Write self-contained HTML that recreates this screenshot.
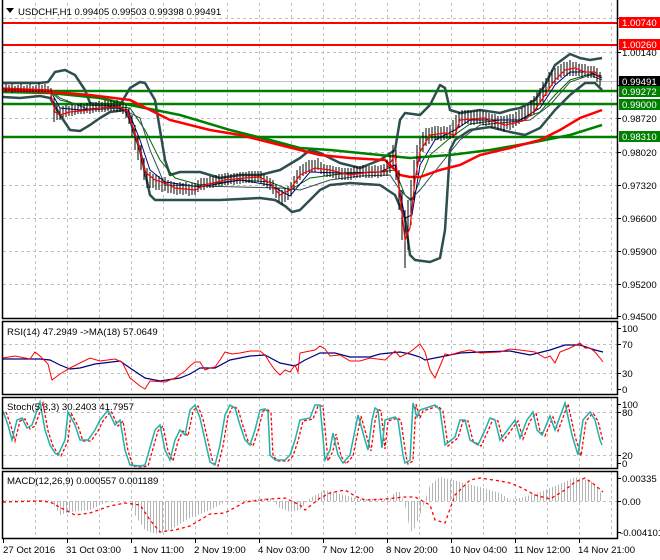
<!DOCTYPE html>
<html><head><meta charset="utf-8"><style>
html,body{margin:0;padding:0;background:#fff;width:660px;height:560px;overflow:hidden}
svg{display:block}
text{font-family:"Liberation Sans",sans-serif;font-size:9.6px;fill:#000}
</style></head><body>
<svg width="660" height="560" viewBox="0 0 660 560" xmlns="http://www.w3.org/2000/svg">
<defs>
<pattern id="hist" x="0" y="0" width="3" height="10" patternUnits="userSpaceOnUse"><rect x="0" y="0" width="1" height="10" fill="#b4b4b4"/></pattern>
</defs>
<rect width="660" height="560" fill="#fff"/>
<g stroke="#c0c0c0" stroke-dasharray="3,3" stroke-width="1" fill="none">
<path d="M3 18.5H617M3 52.5H617M3 118.5H617M3 152.5H617M3 185.5H617M3 218.5H617M3 251.5H617M3 284.5H617"/>
<path d="M35.5 3V318M67.5 3V318M99.5 3V318M131.5 3V318M163.5 3V318M195.5 3V318M227.5 3V318M259.5 3V318M291.5 3V318M323.5 3V318M355.5 3V318M387.5 3V318M419.5 3V318M451.5 3V318M483.5 3V318M515.5 3V318M547.5 3V318M579.5 3V318M611.5 3V318"/>
<path d="M3 344.5H617M3 373.5H617M3 412.5H617M3 455.5H617M3 501.5H617"/>
<path d="M35.5 322V394M67.5 322V394M99.5 322V394M131.5 322V394M163.5 322V394M195.5 322V394M227.5 322V394M259.5 322V394M291.5 322V394M323.5 322V394M355.5 322V394M387.5 322V394M419.5 322V394M451.5 322V394M483.5 322V394M515.5 322V394M547.5 322V394M579.5 322V394M611.5 322V394"/>
<path d="M35.5 398V468M67.5 398V468M99.5 398V468M131.5 398V468M163.5 398V468M195.5 398V468M227.5 398V468M259.5 398V468M291.5 398V468M323.5 398V468M355.5 398V468M387.5 398V468M419.5 398V468M451.5 398V468M483.5 398V468M515.5 398V468M547.5 398V468M579.5 398V468M611.5 398V468"/>
<path d="M35.5 472V538M67.5 472V538M99.5 472V538M131.5 472V538M163.5 472V538M195.5 472V538M227.5 472V538M259.5 472V538M291.5 472V538M323.5 472V538M355.5 472V538M387.5 472V538M419.5 472V538M451.5 472V538M483.5 472V538M515.5 472V538M547.5 472V538M579.5 472V538M611.5 472V538"/>
</g>
<path d="M3 81.5H617" stroke="#c0c0c0" stroke-width="1"/>
<path d="M3 23H617M3 45H617" stroke="#ff0000" stroke-width="2"/>
<path d="M3 91H617M3 104H617M3 137H617" stroke="#008000" stroke-width="2.5"/>
<g fill="none" stroke="#2f4f4f" stroke-width="2.5" stroke-linejoin="round">
<polyline points="3,83 40,83 48,82 55,72 65,70 75,75 85,90 90,103 100,105 120,105 130,88 140,82 145,83 155,100 160,130 165,160 170,175 180,172 200,172 220,178 240,175 260,175 280,170 300,158 310,150 320,153 340,163 360,168 380,160 395,150 400,120 405,113 420,115 430,105 440,85 445,88 450,110 460,113 480,110 500,113 510,110 520,108 535,100 545,85 555,65 570,54 580,58 590,60 602,58"/>
<polyline points="3,97 20,98 40,96 50,98 60,115 70,130 80,131 90,125 100,118 110,112 125,110 130,120 140,150 150,195 155,200 180,200 220,200 260,198 275,200 285,206 292,212 300,210 310,200 320,190 330,185 350,183 380,185 395,195 405,218 410,255 415,260 430,262 440,258 445,230 450,150 455,140 470,130 490,127 510,132 525,135 540,128 555,110 570,95 585,83 595,83 602,90"/>
</g>
<polyline fill="none" stroke="#006400" stroke-width="1" points="3,90 50,91 60,100 80,105 110,106 130,108 145,130 160,160 175,178 200,185 240,180 270,182 290,190 310,178 340,174 380,172 395,170 405,195 412,200 420,180 430,155 450,138 470,124 500,120 520,120 540,112 555,95 570,80 590,74 602,76"/>
<polyline fill="none" stroke="#000080" stroke-width="1" points="3,89 50,90 60,108 80,110 110,107 128,110 140,140 150,170 165,182 200,187 240,180 270,185 290,196 310,172 340,173 380,172 395,165 405,218 412,215 420,165 435,140 455,130 470,120 500,120 520,120 540,108 555,85 570,72 590,72 602,78"/>
<polyline fill="none" stroke="#2f4f4f" stroke-width="1" points="3,90 50,90 60,98 90,110 120,108 140,118 150,150 165,185 200,186 240,187 280,188 300,190 330,180 360,176 390,175 400,190 410,200 420,190 440,165 460,140 480,125 510,122 530,120 550,105 570,82 590,75 602,80"/>
<polyline fill="none" stroke="#008000" stroke-width="2.5" points="3,92 50,93 100,98 130,105 180,115 230,130 270,140 300,148 330,150 380,155 410,158 450,155 490,150 530,143 570,135 602,125"/>
<polyline fill="none" stroke="#ff0000" stroke-width="2.5" points="3,90 50,92 90,95 130,100 170,120 210,130 240,135 280,145 300,150 320,155 350,158 385,160 400,175 410,177 420,177 440,170 460,165 480,155 510,148 540,140 560,130 580,118 602,110"/>
<!-- candles -->
<g stroke="#000" stroke-width="1">
<path d="M6 84v8M9 85v6M12 84v9M15 86v6M18 85v7M21 84v8M24 86v6M27 85v7M30 84v8M33 86v6M36 85v7M39 83v9M42 85v7M45 84v8M48 86v6M51 88v10M54 98v24M57 105v15M60 108v12M63 106v12M66 105v12M69 106v10M72 104v12M75 105v10M78 104v10M81 103v11M84 104v10M87 103v10M90 102v12M93 103v10M96 102v10M99 101v11M102 102v10M105 100v12M108 101v10M111 100v11M114 101v10M117 100v12M120 102v10M123 102v12M126 104v14M129 108v16M132 115v22M135 125v25M138 135v25M141 145v25M144 158v22M147 168v20M150 172v16M153 174v14M156 175v15M159 176v14M162 178v14M165 177v14M168 180v13M171 181v12M174 182v12M177 183v12M180 182v12M183 183v12M186 182v12M189 184v12M192 183v12M195 183v12M198 180v12M201 178v12M204 178v12M207 178v10M210 176v12M213 176v12M216 175v12M219 174v12M222 174v12M225 173v12M228 173v12M231 174v10M234 173v12M237 173v11M240 172v12M243 172v11M246 172v11M249 171v12M252 171v12M255 171v11M258 171v11M261 171v12M264 174v12M267 176v12M270 178v12M273 180v14M276 184v14M279 188v14M282 190v15M285 188v14M288 186v14M291 182v14M294 176v14M297 170v14M300 166v14M303 164v12M306 162v12M309 160v12M312 160v12M315 160v12M318 158v12M321 162v12M324 164v12M327 165v12M330 165v12M333 166v12M336 167v12M339 167v12M342 168v12M345 168v12M348 168v12M351 168v12M354 166v12M357 166v12M360 166v12M363 165v12M366 166v12M369 166v12M372 166v12M375 165v12M378 166v12M381 165v12M384 164v12M387 160v16M390 155v18M393 145v22M396 150v30M399 170v40M402 190v50M405 210v58M408 200v50M411 180v45M414 160v40M417 145v30M420 138v24M423 132v20M426 128v18M429 128v16M432 127v14M435 126v14M438 126v14M441 127v14M444 126v14M447 127v12M450 125v14M453 120v18M456 115v20M459 112v16M462 110v16M465 110v14M468 110v14M471 111v14M474 111v14M477 110v14M480 110v14M483 111v14M486 112v14M489 113v12M492 114v14M495 114v14M498 116v14M501 116v14M504 116v16M507 115v14M510 114v16M513 114v14M516 112v14M519 110v14M522 108v14M525 106v14M528 104v14M531 100v16M534 96v18M537 92v18M540 88v16M543 82v20M546 78v18M549 72v18M552 70v16M555 68v16M558 66v14M561 64v14M564 62v14M567 62v14M570 60v16M573 62v14M576 62v14M579 64v12M582 64v14M585 64v12M588 66v12M591 66v12M594 66v12M597 68v14M600 72v14"/>
</g>
<polyline fill="none" stroke="#ff0000" stroke-width="1.2" points="3,88 50,90 55,112 60,115 70,112 90,110 100,108 120,107 128,112 140,150 145,172 155,180 165,183 175,188 195,190 205,185 225,180 245,178 260,177 270,183 280,195 290,190 300,175 315,168 330,170 350,175 370,172 385,172 395,155 400,195 405,240 410,228 415,180 420,152 430,135 445,133 455,135 460,120 485,118 495,122 505,125 515,123 525,120 535,110 545,95 555,80 565,70 575,68 585,72 595,72 600,78"/>
<!-- RSI -->
<polyline fill="none" stroke="#000080" stroke-width="1.2" points="3,359 40,359 50,360 60,365 70,369 80,368 95,364 120,361 130,368 145,378 160,381 180,378 190,374 200,368 215,368 230,360 250,356 265,355 280,363 295,366 305,360 320,353 335,353 350,357 370,357 380,354 400,352 410,354 420,357 425,360 440,357 460,353 480,352 510,351 520,353 530,355 550,350 565,345 580,345 595,350 603,352"/>
<polyline fill="none" stroke="#ff0000" stroke-width="1" points="3,358 15,356 30,359 35,352 40,356 48,364 52,380 60,374 70,368 80,363 90,358 100,361 115,359 122,362 130,378 140,386 145,389 150,381 165,382 175,378 185,371 190,366 195,362 200,362 205,370 210,368 215,367 220,360 225,352 232,354 240,353 250,351 260,351 265,355 270,363 275,370 280,375 285,370 290,372 295,365 298,372 300,353 305,352 315,350 320,346 325,349 330,356 340,355 350,361 360,361 370,358 385,360 395,351 400,357 410,352 420,344 425,352 430,370 435,378 440,366 445,354 450,355 460,352 470,350 480,353 500,352 510,349 520,350 535,352 545,358 550,356 555,363 560,352 570,348 580,343 585,348 590,348 595,352 600,358 603,362"/>
<!-- Stoch -->
<polyline fill="none" stroke="#ff0000" stroke-width="1.3" stroke-dasharray="3,2" transform="translate(3,1)" points="3,411 8,425 12,440 17,420 22,418 27,428 32,425 40,402 45,430 50,445 55,453 58,455 65,440 68,412 75,425 80,440 88,440 95,430 100,420 108,410 115,425 120,420 125,450 130,465 140,466 145,465 155,430 160,425 165,450 170,460 175,440 180,430 185,435 190,410 195,405 200,418 205,440 210,462 215,465 220,445 225,415 230,405 235,408 240,425 245,440 250,445 255,430 260,410 265,409 268,412 270,455 275,460 285,460 290,455 295,440 300,420 310,418 315,405 320,405 325,460 330,450 333,433 338,455 343,463 350,455 355,430 358,415 365,440 368,450 372,420 375,408 378,410 382,448 385,420 395,417 398,420 403,455 405,463 410,460 413,403 417,417 420,410 435,405 440,410 445,445 455,437 460,420 465,420 470,440 478,445 485,430 490,418 495,420 500,440 515,420 520,438 527,420 533,412 537,430 542,435 550,416 555,430 565,403 572,435 578,455 583,420 590,412 595,420 600,440"/>
<polyline fill="none" stroke="#20b2aa" stroke-width="1.5" points="3,411 8,425 12,440 17,420 22,418 27,428 32,425 40,402 45,430 50,445 55,453 58,455 65,440 68,412 75,425 80,440 88,440 95,430 100,420 108,410 115,425 120,420 125,450 130,465 140,466 145,465 155,430 160,425 165,450 170,460 175,440 180,430 185,435 190,410 195,405 200,418 205,440 210,462 215,465 220,445 225,415 230,405 235,408 240,425 245,440 250,445 255,430 260,410 265,409 268,412 270,455 275,460 285,460 290,455 295,440 300,420 310,418 315,405 320,405 325,460 330,450 333,433 338,455 343,463 350,455 355,430 358,415 365,440 368,450 372,420 375,408 378,410 382,448 385,420 395,417 398,420 403,455 405,463 410,460 413,403 417,417 420,410 435,405 440,410 445,445 455,437 460,420 465,420 470,440 478,445 485,430 490,418 495,420 500,440 515,420 520,438 527,420 533,412 537,430 542,435 550,416 555,430 565,403 572,435 578,455 583,420 590,412 595,420 600,440 602,445"/>
<!-- MACD -->
<polygon fill="url(#hist)" points="3,500 48,500 52,502 60,515 70,512 90,510 100,505 110,501 130,501 135,515 145,530 155,534 170,530 190,518 210,510 225,502 270,498 280,508 290,512 300,510 310,498 325,490 340,494 360,499 390,499 395,492 400,492 405,505 410,530 413,532 418,520 422,510 430,485 440,477 460,482 480,487 500,493 510,500 520,498 540,492 560,484 575,477 590,480 600,490 603,501 3,501"/>
<polyline fill="none" stroke="#ff0000" stroke-width="1.3" stroke-dasharray="3,3" points="3,502 40,501 50,502 65,510 75,515 90,513 110,506 125,503 140,505 150,520 160,532 175,530 190,526 210,514 225,513 245,502 270,499 285,498 300,505 305,510 320,498 330,493 345,490 355,496 365,500 385,499 405,497 415,497 430,505 435,520 445,523 455,495 470,480 480,478 500,481 510,483 520,487 535,495 550,499 565,490 575,482 585,478 595,485 603,492"/>
<g fill="none" stroke="#000" stroke-width="1.5">
<path d="M2.5 0V318.5H617.5V0"/>
<rect x="2.5" y="321.5" width="615" height="73"/>
<rect x="2.5" y="397.5" width="615" height="71"/>
<rect x="2.5" y="471.5" width="615" height="67"/>
</g>
<g stroke="#000" stroke-width="1">
<path d="M617 18.5h4M617 52.5h4M617 85.5h4M617 118.5h4M617 152.5h4M617 185.5h4M617 218.5h4M617 251.5h4M617 284.5h4M617 316.5h4"/>
<path d="M617 328.5h4M617 344.5h4M617 373.5h4M617 389.5h4M617 404.5h4M617 412.5h4M617 455.5h4M617 463.5h4M617 478.5h4M617 501.5h4M617 532.5h4"/>
<path d="M3.5 538v5M67.5 538v5M131.5 538v5M195.5 538v5M259.5 538v5M323.5 538v5M387.5 538v5M451.5 538v5M515.5 538v5M579.5 538v5"/>
</g>
<path d="M6 8h8l-4 5z" fill="#000"/>
<text x="18" y="15">USDCHF,H1  0.99405 0.99503 0.99398 0.99491</text>
<text x="7" y="335">RSI(14) 47.2949  -&gt;MA(18) 57.0649</text>
<text x="7" y="410">Stoch(5,3,3) 30.2403 41.7957</text>
<text x="7" y="484">MACD(12,26,9) 0.000557 0.001189</text>
<text x="622" y="56">1.00140</text>
<text x="622" y="122">0.98720</text>
<text x="622" y="156">0.98020</text>
<text x="622" y="189">0.97320</text>
<text x="622" y="222">0.96600</text>
<text x="622" y="255">0.95900</text>
<text x="622" y="288">0.95200</text>
<text x="622" y="320">0.94500</text>
<rect x="619" y="17" width="41" height="11" fill="#ff0000"/><text x="622" y="26" style="fill:#fff">1.00740</text>
<rect x="619" y="39" width="41" height="11" fill="#ff0000"/><text x="622" y="48" style="fill:#fff">1.00260</text>
<rect x="619" y="76" width="41" height="11" fill="#000"/><text x="622" y="85" style="fill:#fff">0.99491</text>
<rect x="619" y="86" width="41" height="11" fill="#008000"/><text x="622" y="95" style="fill:#fff">0.99272</text>
<rect x="619" y="99" width="41" height="11" fill="#008000"/><text x="622" y="108" style="fill:#fff">0.99000</text>
<rect x="619" y="131" width="41" height="11" fill="#008000"/><text x="622" y="140" style="fill:#fff">0.98310</text>
<text x="622" y="332">100</text>
<text x="622" y="348">70</text>
<text x="622" y="377">30</text>
<text x="622" y="393">0</text>
<text x="622" y="408">100</text>
<text x="622" y="416">80</text>
<text x="622" y="459">20</text>
<text x="622" y="467">0</text>
<text x="622" y="482">0.00335</text>
<text x="622" y="505">0.00</text>
<text x="620" y="536">-0.004101</text>
<text x="3" y="553">27 Oct 2016</text>
<text x="66" y="553">31 Oct 03:00</text>
<text x="133" y="553">1 Nov 11:00</text>
<text x="194" y="553">2 Nov 19:00</text>
<text x="258" y="553">4 Nov 03:00</text>
<text x="322" y="553">7 Nov 12:00</text>
<text x="386" y="553">8 Nov 20:00</text>
<text x="450" y="553">10 Nov 04:00</text>
<text x="514" y="553">11 Nov 12:00</text>
<text x="578" y="553">14 Nov 21:00</text>
</svg>
</body></html>
